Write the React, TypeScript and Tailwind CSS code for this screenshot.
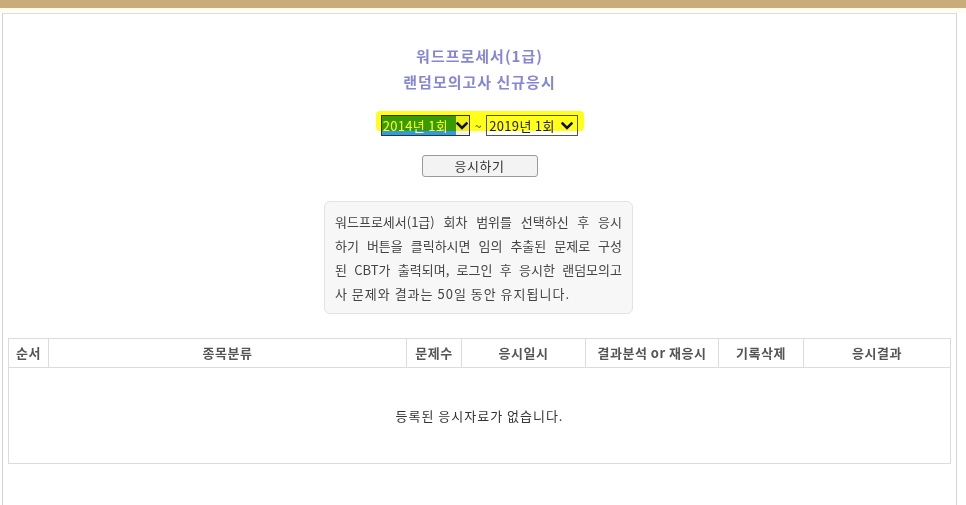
import React from "react";

const Chevron = () => (
  <svg width="12" height="10" viewBox="0 0 12 10" className="block">
    <path d="M1.5 2.5 L6 7 L10.5 2.5" fill="none" stroke="#111" strokeWidth="2.6" strokeLinecap="square" />
  </svg>
);

export default function App() {
  const lines = [
    "워드프로세서(1급) 회차 범위를 선택하신 후 응시",
    "하기 버튼을 클릭하시면 임의 추출된 문제로 구성",
    "된 CBT가 출력되며, 로그인 후 응시한 랜덤모의고",
  ];
  const cols = [
    { t: "순서", w: "w-[40px]" },
    { t: "종목분류", w: "w-[358px]" },
    { t: "문제수", w: "w-[55px]" },
    { t: "응시일시", w: "w-[124px]" },
    { t: "결과분석 or 재응시", w: "w-[133px]" },
    { t: "기록삭제", w: "w-[85px]" },
    { t: "응시결과", w: "flex-1" },
  ];
  return (
    <div
      className="w-[966px] h-[505px] overflow-hidden bg-white text-[13px] text-[#444]"
      style={{ fontFamily: '"Malgun Gothic", "Noto Sans CJK KR", "Noto Sans", sans-serif' }}
    >
      <div className="h-[8px] bg-[#c8ad7b]" />
      <div className="h-[5px] bg-[#fffdf0]" />
      <div className="ml-[2px] mr-[9px] h-[600px] border border-[#d4d4d4] border-t-[#dcdce4]">
        <div className="mt-[29px] flex flex-col items-center text-[15px] font-bold leading-[26px] tracking-[1px] text-[#8686d6]">
          <div>워드프로세서(1급)</div>
          <div>랜덤모의고사 신규응시</div>
        </div>

        <div className="mt-[20px] flex justify-center">
          <div className="relative flex items-center">
            <div className="absolute left-[-5px] right-[-6px] top-[-4px] h-[20px] rounded-[4px] bg-[#ffff1a] mix-blend-multiply" />
            <div className="flex h-[21px] w-[89px] items-center border border-[#333] bg-[#e8e8e8]">
              <span className="flex h-[19px] w-[74px] items-center pl-[1px] text-[13px] tracking-[0.3px] text-white bg-[linear-gradient(#3a9a28_0_76%,#2f9be0_76%_100%)]">
                2014년 1회
              </span>
              <span className="flex flex-1 justify-center bg-[#f0f0f0] h-[19px] items-center">
                <Chevron />
              </span>
            </div>
            <span className="mx-[5px] text-[12px] text-[#333]">~</span>
            <div className="flex h-[21px] w-[92px] items-center border border-[#555] bg-white">
              <span className="pl-[2px] text-[13px] tracking-[0.3px] text-[#222]">2019년 1회</span>
              <span className="ml-auto mr-[4px]">
                <Chevron />
              </span>
            </div>
          </div>
        </div>

        <div className="mt-[19px] flex justify-center">
          <button className="h-[22px] w-[116px] rounded-[3px] border border-[#9a9a9a] bg-[#f3f3f3] text-[13px] tracking-[0.5px] text-[#333]">
            응시하기
          </button>
        </div>

        <div className="mt-[24px] flex justify-center">
          <div className="ml-[-2px] w-[309px] rounded-[6px] border border-[#e3e3e3] bg-[#f7f7f7] px-[10px] pt-[8px] pb-[7px] text-[13px] leading-[24px] text-[#444]">
            {lines.map((l) => (
              <div key={l} className="text-justify [text-align-last:justify] whitespace-nowrap">
                {l}
              </div>
            ))}
            <div className="tracking-[1px]">사 문제와 결과는 50일 동안 유지됩니다.</div>
          </div>
        </div>

        <div className="mx-[5px] mt-[24px] border border-[#dcdcdc]">
          <div className="flex h-[29px] border-b border-[#dcdcdc]">
            {cols.map((c, i) => (
              <div
                key={c.t}
                className={`${c.w} flex items-center justify-center text-[13px] font-bold tracking-[0.5px] text-[#555] ${
                  i < cols.length - 1 ? "border-r border-[#dcdcdc]" : ""
                }`}
              >
                {c.t}
              </div>
            ))}
          </div>
          <div className="flex h-[95px] items-center justify-center text-[13px] tracking-[1px] text-[#333]">
            등록된 응시자료가 없습니다.
          </div>
        </div>
      </div>
    </div>
  );
}
